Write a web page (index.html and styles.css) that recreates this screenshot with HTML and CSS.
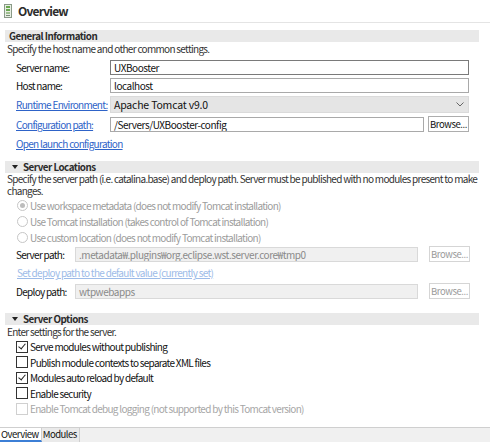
FILE: index.html
```html
<!DOCTYPE html>
<html>
<head>
<meta charset="utf-8">
<link rel="stylesheet" href="styles.css">
</head>
<body>
<div class="page">
  <div class="title">
    <svg class="title-icon" width="8" height="14" viewBox="0 0 8 14">
      <rect x="0.5" y="0.5" width="7" height="13" fill="#e8efe4" stroke="#8a9a88"/>
      <rect x="2" y="2" width="4" height="2" fill="#6aa84f"/>
      <rect x="2" y="5" width="4" height="2" fill="#6aa84f"/>
      <rect x="2" y="8" width="4" height="2" fill="#9fbf90"/>
      <rect x="2" y="11" width="4" height="1" fill="#7a8a78"/>
    </svg>
    <span class="title-text">Overview</span>
  </div>

  <div class="section">
    <div class="section-head plain">General Information</div>
    <div class="desc">Specify the host name and other common settings.</div>
    <div class="form">
      <div class="row r1"><span class="label">Server name:</span><div class="field focus">UXBooster</div></div>
      <div class="row r2"><span class="label">Host name:</span><div class="field">localhost</div></div>
      <div class="row r3"><span class="label link">Runtime Environment:</span><div class="select">Apache Tomcat v9.0<svg class="chev" width="8" height="5" viewBox="0 0 8 5"><path d="M0.5 0.5 L4 4 L7.5 0.5" fill="none" stroke="#666" stroke-width="1"/></svg></div></div>
      <div class="row r4"><span class="label link">Configuration path:</span><div class="field">/Servers/UXBooster-config</div><div class="btn">Browse...</div></div>
      <div class="link open-link">Open launch configuration</div>
    </div>
  </div>

  <div class="section s2">
    <div class="section-head"><span class="tri"></span>Server Locations</div>
    <div class="desc two">Specify the server path (i.e. catalina.base) and deploy path. Server must be published with no modules present to make changes.</div>
    <div class="radios">
      <div class="radio-row"><span class="radio on"></span>Use workspace metadata (does not modify Tomcat installation)</div>
      <div class="radio-row"><span class="radio"></span>Use Tomcat installation (takes control of Tomcat installation)</div>
      <div class="radio-row"><span class="radio"></span>Use custom location (does not modify Tomcat installation)</div>
    </div>
    <div class="form">
      <div class="row r5"><span class="label short">Server path:</span><div class="field dis">.metadata₩.plugins₩org.eclipse.wst.server.core₩tmp0</div><div class="btn dis">Browse...</div></div>
      <div class="link dis-link">Set deploy path to the default value (currently set)</div>
      <div class="row r6"><span class="label short">Deploy path:</span><div class="field dis">wtpwebapps</div><div class="btn dis">Browse...</div></div>
    </div>
  </div>

  <div class="section s3">
    <div class="section-head"><span class="tri"></span>Server Options</div>
    <div class="desc">Enter settings for the server.</div>
    <div class="checks">
      <div class="check-row"><span class="cb checked"></span>Serve modules without publishing</div>
      <div class="check-row"><span class="cb"></span>Publish module contexts to separate XML files</div>
      <div class="check-row"><span class="cb checked"></span>Modules auto reload by default</div>
      <div class="check-row"><span class="cb"></span>Enable security</div>
      <div class="check-row disabled"><span class="cb"></span>Enable Tomcat debug logging (not supported by this Tomcat version)</div>
    </div>
  </div>
</div>
<div class="tabs">
  <div class="tab active">Overview</div>
  <div class="tab">Modules</div>
</div>
</body>
</html>
```
FILE: styles.css
```css
html, body {
  margin: 0;
  padding: 0;
  background: #ffffff;
}
body {
  width: 490px;
  height: 442px;
  overflow: hidden;
  font-family: "Noto Sans CJK KR", "Noto Sans", sans-serif;
  font-size: 10px;
  letter-spacing: -0.7px;
  line-height: 13px;
  color: #111;
}
.page {
  height: 427px;
  overflow: hidden;
}
.title {
  height: 23px;
  border-bottom: 1px solid #e4e4e4;
  display: flex;
  align-items: center;
  padding-left: 4px;
  box-sizing: border-box;
}
.title-icon {
  margin-right: 6px;
}
.title-text {
  font-weight: bold;
  font-size: 12px;
  letter-spacing: -0.8px;
  line-height: 16px;
  color: #2b2b2b;
}
.section {
  margin-left: 5px;
  width: 474px;
  margin-top: 7px;
}
.section-head {
  height: 12px;
  line-height: 12px;
  background: #e9e9e9;
  font-weight: bold;
  font-size: 9.8px;
  letter-spacing: -0.5px;
  color: #2b2b2b;
  padding-left: 4px;
  display: flex;
  align-items: center;
  overflow: hidden;
}
.tri {
  width: 0;
  height: 0;
  border-left: 3px solid transparent;
  border-right: 3px solid transparent;
  border-top: 4px solid #222;
  margin: 0 5px 0 3px;
}
.desc {
  margin-left: 2px;
  line-height: 13px;
  color: #333;
  white-space: nowrap;
}
.desc.two {
  white-space: normal;
  width: 476px;
  line-height: 12px;
}
.form {
  padding-left: 11px;
  width: 453px;
}
.row {
  display: flex;
  align-items: center;
  white-space: nowrap;
}
.label {
  width: 94px;
  flex: none;
  white-space: nowrap;
}
.label.short {
  width: 59px;
}
.link {
  color: #2e63c8;
  text-decoration: underline;
  white-space: nowrap;
}
.field {
  flex: 1;
  height: 15px;
  line-height: 13px;
  border: 1px solid #a9a9a9;
  box-sizing: border-box;
  padding-left: 3px;
  background: #fff;
  white-space: nowrap;
  overflow: hidden;
  font-size: 10px;
  letter-spacing: -0.45px;
}
.field.focus {
  border-color: #7a7a7a;
}
.field.dis {
  background: #f0f0f0;
  border-color: #d9d9d9;
  color: #8a8a8a;
}
.select {
  flex: 1;
  height: 17px;
  box-sizing: border-box;
  background: #e5e5e5;
  border: 1px solid #dadada;
  padding-left: 3px;
  display: flex;
  align-items: center;
  justify-content: space-between;
  padding-right: 4px;
  font-size: 10.5px;
  letter-spacing: -0.2px;
}
.btn {
  flex: none;
  width: 41px;
  height: 16px;
  box-sizing: border-box;
  border: 1px solid #adadad;
  margin-left: 4px;
  text-align: center;
  line-height: 14px;
  background: #fff;
  font-size: 9.5px;
  letter-spacing: -0.4px;
}
.btn.dis {
  color: #9a9a9a;
  border-color: #d5d5d5;
}
.r1 { margin-top: 5px; }
.r2 { margin-top: 3px; }
.r3 { margin-top: 3px; }
.r4 { margin-top: 3px; }
.open-link {
  margin-top: 5px;
  line-height: 13px;
}
.s2 { margin-top: 11px; }
.radios {
  margin-top: 0px;
  padding-left: 12px;
}
.radio-row {
  display: flex;
  align-items: center;
  height: 16px;
  color: #9c9c9c;
  white-space: nowrap;
}
.radio {
  width: 9px;
  height: 9px;
  border: 1px solid #c6c6c6;
  border-radius: 50%;
  margin-right: 2px;
  box-sizing: content-box;
  position: relative;
  flex: none;
}
.radio.on::after {
  content: "";
  position: absolute;
  left: 2px;
  top: 2px;
  width: 5px;
  height: 5px;
  border-radius: 50%;
  background: #bdbdbd;
}
.r5 { margin-top: 1px; }
.r5 .field, .r6 .field { flex: none; width: 343px; }
.r5 .btn, .r6 .btn { margin-left: 11px; }
.dis-link {
  color: #9dbbe8;
  margin-top: 4px;
  margin-left: 1px;
  line-height: 13px;
}
.r6 { margin-top: 4px; }
.s3 { margin-top: 14px; }
.checks {
  margin-top: 1px;
  padding-left: 11px;
}
.check-row {
  display: flex;
  align-items: center;
  height: 15.5px;
  white-space: nowrap;
}
.check-row.disabled {
  color: #a6a6a6;
}
.cb {
  width: 10px;
  height: 10px;
  border: 1px solid #333;
  margin-right: 2px;
  position: relative;
  background: #fff;
  flex: none;
}
.check-row.disabled .cb {
  border-color: #d0d0d0;
}
.cb.checked::after {
  content: "";
  position: absolute;
  left: 3px;
  top: 0px;
  width: 3px;
  height: 6px;
  border-right: 1px solid #222;
  border-bottom: 1px solid #222;
  transform: rotate(40deg);
}
.tabs {
  height: 15px;
  border-top: 1px solid #cfcfcf;
  background: #f0f0f0;
  display: flex;
  box-sizing: border-box;
}
.tab {
  height: 14px;
  line-height: 13px;
  padding: 0 2px 0 1px;
  font-size: 9.5px;
  letter-spacing: -0.5px;
  box-sizing: border-box;
  border-right: 1px solid #cfcfcf;
  background: #eaeaea;
}
.tab.active {
  background: #fff;
  border-bottom: 2px solid #3c7fd6;
}
```
